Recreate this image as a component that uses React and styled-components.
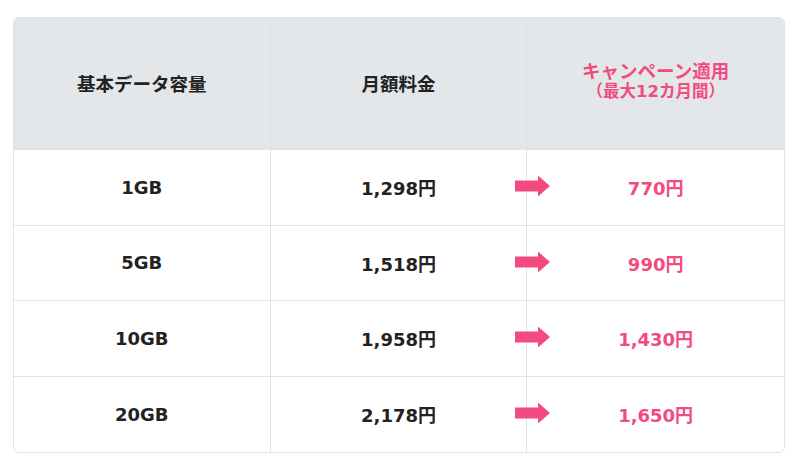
import React from "react";
import styled, { createGlobalStyle } from "styled-components";

const Global = createGlobalStyle`
  html, body { margin: 0; padding: 0; background: #fff; }
  body { font-family: "DejaVu Sans", "Noto Sans CJK JP", sans-serif; }
`;

const Page = styled.div`
  padding: 17px 15px 16px 13px;
  width: 800px;
  box-sizing: border-box;
`;

const Table = styled.div`
  width: 772px;
  box-sizing: border-box;
  border: 1px solid #e2e2e2;
  border-radius: 6px;
  overflow: hidden;
  display: grid;
  grid-template-columns: repeat(3, 1fr);
  grid-template-rows: 132px repeat(4, 75.5px);
`;

const HeadCell = styled.div`
  background: #e3e7ea;
  display: flex;
  flex-direction: column;
  align-items: center;
  justify-content: center;
  border-right: ${(p) => (p.$last ? "none" : "1px solid #dde0e3")};
  border-bottom: 1px solid #e2e2e2;
  color: ${(p) => (p.$pink ? "#f24b7f" : "#222")};
  font-family: "Noto Sans CJK JP", sans-serif;
  font-weight: 700;
  font-size: 18.5px;
  line-height: 22px;
  padding-bottom: ${(p) => (p.$pink ? "6px" : "2px")};
`;

const Sub = styled.span`
  font-size: 16.5px;
  line-height: 21px;
  font-family: "DejaVu Sans", "Noto Sans CJK JP", sans-serif;
`;

const Cell = styled.div`
  position: relative;
  display: flex;
  align-items: center;
  justify-content: center;
  border-right: ${(p) => (p.$last ? "none" : "1px solid #e2e2e2")};
  border-bottom: ${(p) => (p.$bottom ? "none" : "1px solid #e2e2e2")};
  color: ${(p) => (p.$pink ? "#f24b7f" : "#222")};
  font-weight: 700;
  font-size: 18px;
`;

const Arrow = styled.svg`
  position: absolute;
  left: -12px;
  top: 50%;
  transform: translateY(-50%);
  margin-top: -1px;
`;

const rows = [
  ["1GB", "1,298円", "770円"],
  ["5GB", "1,518円", "990円"],
  ["10GB", "1,958円", "1,430円"],
  ["20GB", "2,178円", "1,650円"],
];

export default function App() {
  return (
    <>
      <Global />
      <Page>
        <Table>
          <HeadCell>基本データ容量</HeadCell>
          <HeadCell>月額料金</HeadCell>
          <HeadCell $pink $last>
            <span>キャンペーン適用</span>
            <Sub>（最大12カ月間）</Sub>
          </HeadCell>
          {rows.map((r, i) => {
            const bottom = i === rows.length - 1;
            return (
              <React.Fragment key={r[0]}>
                <Cell $bottom={bottom}>{r[0]}</Cell>
                <Cell $bottom={bottom}>{r[1]}</Cell>
                <Cell $bottom={bottom} $last $pink>
                  <Arrow width="36" height="21" viewBox="0 0 36 21">
                    <path d="M0 5 H23 V0 L35 10.5 L23 21 V16 H0 Z" fill="#f24b7f" />
                  </Arrow>
                  {r[2]}
                </Cell>
              </React.Fragment>
            );
          })}
        </Table>
      </Page>
    </>
  );
}
